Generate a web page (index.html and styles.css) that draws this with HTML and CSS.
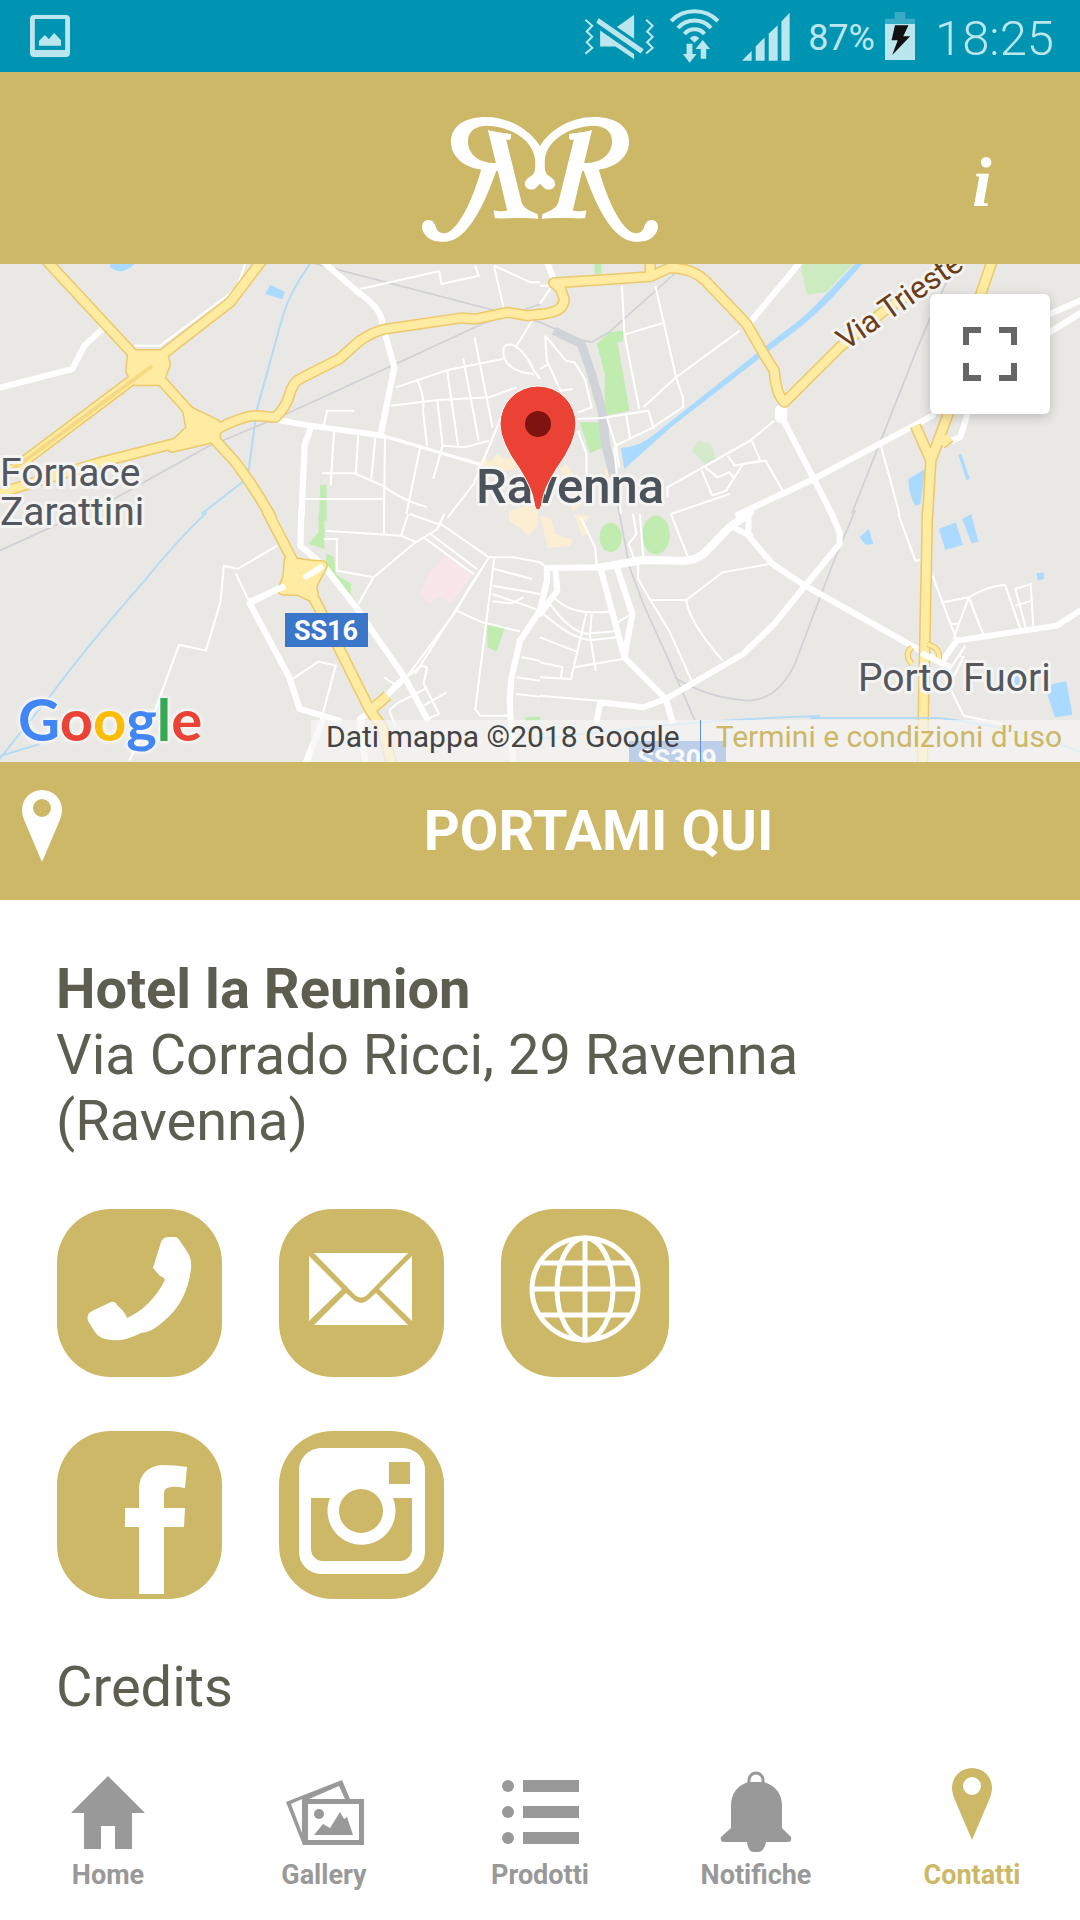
FILE: index.html
```html
<!DOCTYPE html>
<html lang="it">
<head>
    <meta charset="UTF-8" />
    <meta name="viewport" content="width=device-width, initial-scale=1.0" />
    <title>Hotel la Reunion - Contatti</title>
    <link rel="stylesheet" href="styles.css">
</head>
<body>
    <div class="status-bar">
        <svg class="status-picture" width="40" height="42" viewBox="0 0 116 126" preserveAspectRatio="none">
            <path fill-rule="evenodd" d="M12 0H104Q116 0 116 12V114Q116 126 104 126H12Q0 126 0 114V12Q0 0 12 0ZM14 12V105H102V12Z" />
            <path d="M26 78L43 60L55 72L70 54L90 76V92H26Z" />
        </svg>
        <svg class="status-mute" width="70" height="47" viewBox="0 0 204 140" preserveAspectRatio="none">
            <g class="line">
                <path d="M4 20L24 38L8 55L24 71L8 87L24 104L4 121" />
                <path d="M181 20L200 38L184 55L200 71L184 87L200 104L181 121" />
            </g>
            <path d="M96 42L146 5V77ZM47 52L146 122V138L92 100H47ZM43 16L174 108L165 121L36 29Z" />
        </svg>
        <svg class="status-wifi" width="51" height="54" viewBox="0 0 148 162" preserveAspectRatio="none">
            <g class="arc">
                <path d="M6 36A94 94 0 0 1 142 36" />
                <path d="M26 57A63 63 0 0 1 122 57" />
                <path d="M45 75A37 37 0 0 1 103 75" />
            </g>
            <path d="M60 88Q74 72 88 88L74 101Z" />
            <path d="M51 104H68V135H80L60 161L40 135H51ZM92 149V120H77L98 93L119 120H108V149Z" />
        </svg>
        <svg class="status-signal" width="48" height="49" viewBox="0 0 140 148" preserveAspectRatio="none">
            <path d="M0 147L28 118V147ZM40 104L66 77V147H40ZM78 66L104 40V147H78ZM115 29L139 2V147H115Z" />
        </svg>
        <span class="status-percent">87%</span>
        <svg class="status-battery" width="30" height="48" viewBox="0 0 87 144" preserveAspectRatio="none">
            <path class="dim" d="M28 0H59V20H87V36H0V20H28Z" />
            <path d="M0 36H87V144H0Z" />
            <path class="bolt" d="M29 40H68L53 73H73L21 129L37 85H19Z" />
        </svg>
        <span class="status-time">18:25</span>
    </div>

    <header class="header">
        <svg class="logo" width="236" height="125" viewBox="68 50 709 375" role="img" aria-label="Reunion">
            <defs>
                <g id="half">
                    <path d="M422 138C452 88 515 50 585 50C650 50 690 78 690 125C690 175 640 208 580 210L548 212L552 188C602 190 639 165 639 122C639 90 612 75 580 76C510 80 442 118 437 180C436 205 437 216 446 225C460 232 468 242 468 252C466 268 445 272 435 263L421 249Z" />
                    <path d="M510 101C530 98 560 95 579 89L549 213L521 331C535 335 550 333 562 330L558 354C520 356 470 350 428 356L430 341C452 332 472 325 478 305L524 118H512Q508 108 510 101Z" />
                    <path d="M556 200H597C622 290 655 362 690 391C704 403 724 402 733 387C738 368 746 358 759 359C771 360 777 369 777 381C775 405 750 424 725 424C705 426 680 424 650 395C605 350 575 270 553 209Z" />
                </g>
            </defs>
            <use href="#half" />
            <use href="#half" transform="translate(845 0) scale(-1 1)" />
        </svg>
        <button class="info" type="button" aria-label="Informazioni">i</button>
    </header>

    <section class="map" aria-label="Mappa">
        <svg class="map-canvas" viewBox="0 0 1080 498" preserveAspectRatio="xMidYMid slice">
            <defs>
                <!-- main roads, drawn once as casing and once as fill -->
                <g id="highways">
                    <g transform="scale(.3444 .3333)">
                        <path class="line" d="M135 -10L395 280L460 340L600 500L680 590Q740 670 790 765" />
                        <path class="line" d="M760 -10L668 115L455 285" />
                        <path class="line" d="M-10 690L280 598L500 540L620 505L640 490Q710 455 745 455L800 460Q830 430 840 395Q850 355 870 345L985 285L1045 230Q1090 200 1120 195L1340 162L1380 165L1475 145L1530 155L1580 150" />
                        <path class="line" d="M-10 650L85 580L445 300" />
                        <path d="M385 272H472L480 300L462 350H395L380 320ZM545 440L625 480V520L500 550L555 495Z" />
                    </g>
                    <g transform="translate(540) scale(.3444 .3333)">
                        <path class="line" d="M-10 152L20 148Q70 140 70 105L60 75L40 57L320 38L375 12Q440 10 480 50L600 180L650 270L680 320Q685 390 710 415L870 250L1000 140L1190 10M320 -10V35" />
                        <path class="line" d="M1313 -10L1270 120L1185 450L1135 590L1125 760M1090 485L1135 590M1190 520L1165 540" />
                    </g>
                    <g transform="translate(0 250) scale(.3444 .3333)">
                        <path class="line" d="M775 -10L850 140L880 190L930 290L1075 590L1110 640L1140 760M1075 590L1125 545" />
                        <path d="M840 140Q880 155 935 155L905 215L910 250L870 230L822 228L836 190Z" />
                    </g>
                    <g transform="translate(540 250) scale(.3444 .3333)">
                        <path class="line" d="M1125 -10L1110 760" />
                    </g>
                </g>
                <g id="ramps" transform="translate(540 250) scale(.3444 .3333)">
                    <path class="line" d="M1080 400Q1055 420 1080 450M1125 390Q1170 405 1155 445" />
                </g>
            </defs>

            <rect width="1080" height="498" fill="#e9e8e5" />

            <g class="park">
                <path transform="scale(.3444 .3333)" d="M930 662H948V770H926Z" />
                <g transform="translate(540) scale(.3444 .3333)">
                    <path opacity=".7" d="M755 0H910L830 85L775 92Z" />
                    <path d="M165 240L200 205L245 200L240 232L225 235L260 440L188 455V330ZM115 475H175L185 550L145 568ZM158 0H178V28L160 32Z" />
                    <path opacity=".5" d="M440 560L460 530L495 540L512 585L480 600Z" />
                </g>
                <path transform="translate(0 250) scale(.3444 .3333)" d="M925 0H942V105L895 90L925 55ZM948 118L970 130L975 180L1020 210L1018 240L1040 270L945 160ZM1415 332L1468 335L1442 412L1415 400ZM1525 610L1568 608V620H1525Z" />
                <g transform="translate(540 250) scale(.3444 .3333)">
                    <ellipse cx="205" cy="70" rx="32" ry="44" />
                    <ellipse cx="337" cy="63" rx="40" ry="58" />
                </g>
            </g>
            <path class="hospital" transform="translate(0 250) scale(.3444 .3333)" d="M1295 125L1378 178L1310 268L1275 250L1245 268L1218 240L1250 170Z" />
            <g class="centre">
                <path d="M509 247L518 244L532 240L538 248V262L528 272L522 265L509 257Z" />
                <path d="M478 200L484 192L490 198L498 190L506 196L515 192V206H478ZM540 252L551 254L555 270L573 276L570 282L548 284ZM574 250L590 252L585 258L589 270L582 272ZM560 205L566 200L576 214L582 240L572 248L566 225ZM604 205H611L618 218H608Z" />
            </g>

            <g class="water">
                <path transform="scale(.3444 .3333)" d="M320 0H390Q355 38 320 10ZM785 62L827 83L820 106L770 90Z" />
                <g transform="translate(540) scale(.3444 .3333)">
                    <path d="M235 552Q290 550 340 505L700 210Q770 160 840 80L915 0H936L850 100Q780 175 710 225L380 490L245 615Z" />
                    <path d="M1070 645L1118 615L1105 720L1090 725Q1070 690 1070 645ZM1215 572L1223 570L1248 645L1238 648Z" />
                </g>
                <path transform="translate(540 250) scale(.3444 .3333)" d="M928 70L955 44L968 90L945 92ZM1158 45L1207 25L1228 92L1177 108ZM1226 15L1252 0L1273 83L1253 88ZM1442 178L1463 175V195L1445 200ZM1465 515L1528 502L1546 602L1495 610ZM1370 475L1400 480L1395 520L1372 515Z" />
            </g>
            <g class="stream">
                <path transform="scale(.3444 .3333)" d="M900 0Q840 85 820 160L745 440L722 620M722 640L585 750" />
                <path transform="translate(0 250) scale(.3444 .3333)" d="M600 -5Q500 95 420 200Q250 400 150 540L-5 740" />
            </g>

            <!-- railways -->
            <g class="rail">
                <path transform="scale(.3444 .3333)" d="M900 -5L1420 135L1570 175M1570 120L1400 180L1180 285L820 455L600 550L340 700L-5 862" />
                <g transform="translate(540) scale(.3444 .3333)">
                    <path d="M0 175L110 225L150 235L200 205L390 30M1180 55Q1110 210 1070 320L905 750" />
                    <path class="yard" d="M40 200L120 240L150 330L180 440L190 540L215 640" />
                </g>
                <path transform="translate(540 250) scale(.3444 .3333)" d="M230 -5L260 160L300 270L370 430L450 620M915 -10L850 150L740 450Q690 560 600 560Q480 550 390 490M215 -100L230 0" />
            </g>

            <g class="street">
                <g transform="scale(.3444 .3333)">
                    <path d="M712 0L690 65L660 95L465 245H390M1045 75L1275 22L1282 60L1390 35L1380 5M1435 10L1462 130M1435 5L1540 55H1568M1545 170L1500 245" />
                    <path d="M1150 370L1300 318L1460 285M1135 425L1270 408L1420 400L1500 370M1210 345Q1235 400 1228 440L1240 545M1298 318L1330 545M1345 283L1390 530M1378 220L1430 490M1270 410L1285 545L1350 550L1420 530M970 500L960 665M1040 515L1033 630M1090 520L1078 645M1118 520L1115 760M1220 550L1180 750M1285 545L1258 645M935 628H1030L1110 665Q1170 710 1240 730M885 705H1115M940 485L950 440H1028M1455 460L1375 660L1300 760" />
                    <path d="M1495 245Q1450 230 1465 285Q1485 325 1550 330M1495 245Q1530 270 1550 320L1568 345" />
                </g>
                <g transform="translate(540) scale(.3444 .3333)">
                    <path d="M238 65L245 210L288 435M335 65L395 340L415 400V430L320 495L220 545M245 212L355 178M580 200L395 340L300 430M15 215L75 290L100 295L130 345L150 430L110 445M15 215L20 290L60 380L95 375M0 315L25 300M110 465L180 462L315 440L330 495M195 462L220 545L230 610M250 450L262 525M215 550L235 750M110 500L135 570V650M680 470L610 530L370 670V700M470 620L500 695M480 610L515 640L550 625L565 645M545 575L565 605L640 590L615 530M500 695L540 680L590 600L655 590L710 690M0 65H35L0 120M550 690L380 750M990 545L1045 755" />
                </g>
                <g transform="translate(0 250) scale(.3444 .3333)">
                    <path d="M375 740L450 590L520 392L598 410L640 265L650 155L690 165L805 95M685 180L725 265M845 498L925 443L975 455L900 740M945 50L1165 65L1210 85M1115 0V60M1185 0L1165 65M1290 0L1270 45L1200 90L1085 190L1040 270M940 75H978V170L1085 190M1280 30L1420 130M1250 60L1385 165M1230 70L1375 180M1190 0L1285 35" />
                    <path d="M1420 130L1360 225L1325 290L1180 490M1405 155L1205 480M1435 135L1380 585L1395 605H1475M1420 130H1490L1568 145M1435 165L1545 195M1430 215L1568 240M1430 240L1568 290M1430 262L1485 268L1520 250M1325 290L1400 325L1510 352M1515 430L1568 440M1500 490L1568 500M1500 540L1568 548M1180 490L1225 455L1240 460L1230 510L1275 600L1240 615M1115 490L1160 520M1130 590L1150 570L1240 522M1230 575L1297 535M1130 590L1150 640" />
                </g>
                <g transform="translate(540 250) scale(.3444 .3333)">
                    <path d="M118 10L160 100L165 160M0 145L20 160M270 0L280 60L258 90L275 140M290 0L300 130M380 0L430 130M320 257L425 258L530 175L665 150M425 258Q430 320 530 440M285 130L285 195L320 257L375 350L440 500M225 325L265 300M40 250Q90 305 200 293M25 265Q100 370 150 358L220 352M10 300Q100 380 150 378L225 370M135 295L90 495L0 490M150 300L145 365L162 470M0 370L105 412M0 445L65 460L60 495M100 460L240 435M0 545L170 560M1040 0L1090 140L1110 138M1140 185L1210 380M1170 265L1245 250L1200 375M1245 250Q1300 215 1350 212L1395 345M1245 250L1290 370M1410 340L1380 225L1425 210L1432 335M1380 275L1428 260M1195 330H1220M1200 490L1230 430L1215 425M1235 395L1175 490L1230 605L1340 630" />
                </g>
            </g>

            <g class="avenue">
                <g transform="scale(.3444 .3333)">
                    <path d="M-5 372L210 315L245 245L300 193M940 -5L1040 85Q1110 135 1110 180L1145 310L1105 515M800 467L900 485L1110 515M905 485L885 540L875 760" />
                    <path stroke-width="10" d="M1110 515L1390 600" />
                </g>
                <g transform="translate(540) scale(.3444 .3333)">
                    <path d="M20 -5L40 45M755 -5L610 175M710 415L700 455L795 645L850 755M575 752L795 645L1140 455M1480 150L1568 110M1480 205L1568 148M1240 455L1220 520L1195 530" />
                    <path class="junction" d="M700 440V460" />
                </g>
                <g transform="translate(0 250) scale(.3444 .3333)">
                    <path d="M875 -10L872 95L940 155L1030 275L1175 490L1240 615M925 162L725 268L840 490L870 585L985 620M1175 490L1080 590L1045 615L1060 740M1568 290L1510 380L1485 490L1480 560L1490 750M935 625L890 740" />
                </g>
                <g transform="translate(540 250) scale(.3444 .3333)">
                    <path class="wide" d="M610 -5L550 40L475 120Q440 145 400 140L300 138L175 160" />
                    <path d="M175 160L20 162V200L0 290M45 165L50 230L0 300M175 160L245 430M225 165L268 300L245 430L365 555L385 625M165 620L175 565L300 580L365 555L590 420L680 330L770 215L870 90V55L845 -5M605 0V65L675 150L770 215L1165 445L1210 380L1500 335L1568 290M560 40L610 65" />
                </g>
            </g>

            <use href="#highways" class="casing" />
            <use href="#highways" class="road" />
            <use href="#ramps" class="casing ramp" />
            <use href="#ramps" class="road ramp" />
            <path class="lane" d="M0 214L30 193L152 102" />
            <path class="bridge" d="M249 338L285 322M304 314L323 302M921 389L950 403" />

            <path class="stream" d="M540 475Q700 455 820 452M810 454H940Q1030 466 1080 488M0 492Q20 486 40 480" />

            <rect x="285" y="349" width="83" height="34" fill="#3a76c9" />
            <text class="shield" x="326" y="376" text-anchor="middle">SS16</text>
            <rect x="629" y="477" width="97" height="24" fill="#3a76c9" />
            <text class="shield" x="677" y="505" text-anchor="middle">SS309</text>

            <text class="label" x="0" y="222">Fornace</text>
            <text class="label" x="0" y="261">Zarattini</text>
            <text class="label" x="858" y="427">Porto Fuori</text>
            <text class="label label-city" x="476" y="239">Ravenna</text>
            <text class="label label-road" transform="translate(846 87) rotate(-35)">Via Trieste</text>

            <path class="marker" d="M538 246Q535 246 534 238Q532 224 519 204Q500 178 500 160A38 38 0 0 1 576 160Q576 178 557 204Q544 224 542 238Q541 246 538 246Z" />
            <circle cx="538" cy="160" r="13" fill="#7f1310" />
        </svg>

        <a class="google" href="#" aria-label="Google"><span class="blue">G</span><span class="red">o</span><span class="yellow">o</span><span class="blue">g</span><span class="green">l</span><span class="red">e</span></a>

        <button class="fullscreen" type="button" aria-label="Schermo intero">
            <svg width="54" height="54" viewBox="0 0 54 54">
                <path d="M18 3H3V18M36 3H51V18M18 51H3V36M36 51H51V36" />
            </svg>
        </button>

        <div class="attribution">
            <span class="attribution-data">Dati mappa ©2018 Google</span>
            <a class="attribution-terms" href="#">Termini e condizioni d'uso</a>
        </div>
    </section>

    <a class="directions" href="#">
        <svg width="42" height="72" viewBox="0 0 42 72">
            <path fill-rule="evenodd" d="M21 0A20 20 0 0 1 41 20Q41 25 38 32L21 72L4 32Q1 25 1 20A20 20 0 0 1 21 0ZM21 9A9 9 0 0 0 21 27A9 9 0 0 0 21 9Z" />
        </svg>
        <span>PORTAMI QUI</span>
    </a>

    <main class="contacts">
        <address class="address">
            <strong>Hotel la Reunion</strong><br>
            Via Corrado Ricci, 29 Ravenna (Ravenna)
        </address>

        <div class="tiles">
            <a class="tile" href="#" aria-label="Telefono">
                <svg width="165" height="168" viewBox="0 0 165 168">
                    <path d="M104 33Q106 28 112 28H117Q121 28 123 32L131 44Q135 51 134 60Q130 93 107 112Q94 124 84 124Q66 133 55 131Q42 130 38 123L31 112Q29 105 35 102L54 93Q58 92 60 96Q69 104 70 109Q94 98 108 71Q107 68 103 67L96 59Z" />
                </svg>
            </a>
            <a class="tile" href="#" aria-label="Email">
                <svg width="165" height="168" viewBox="0 0 165 168">
                    <path d="M35 44H129L88 86Q82 91 76 86ZM30 47L63 80L30 112ZM133 47V112L100 80ZM35 116L67 84L75 91Q82 97 89 91L97 84L129 116Z" />
                </svg>
            </a>
            <a class="tile" href="#" aria-label="Sito web">
                <svg width="168" height="168" viewBox="0 0 168 168">
                    <g class="globe">
                        <ellipse cx="84" cy="80" rx="53" ry="51" />
                        <ellipse cx="84" cy="80" rx="28" ry="51" />
                        <path d="M84 29V131M31 80H137M40 54H128M40 106H128" />
                    </g>
                </svg>
            </a>
            <a class="tile" href="#" aria-label="Facebook">
                <svg width="165" height="168" viewBox="0 0 165 168">
                    <path d="M130 36L128 57Q107 53 107 62V77H128L127 96H107V163H82V96H68V77H82V57Q83 37 104 34Q118 34 130 36Z" />
                </svg>
            </a>
            <a class="tile" href="#" aria-label="Instagram">
                <svg width="165" height="168" viewBox="0 0 165 168">
                    <path fill-rule="evenodd" d="M42 17H124A22 22 0 0 1 146 39V121A22 22 0 0 1 124 143H42A22 22 0 0 1 20 121V39A22 22 0 0 1 42 17ZM110 31V53H131V31ZM32 67V118A12 12 0 0 0 44 130H121A12 12 0 0 0 133 118V67H114A34 34 0 1 1 51 67ZM82 58A22 22 0 0 0 82 102A22 22 0 0 0 82 58Z" />
                </svg>
            </a>
        </div>

        <a class="credits" href="#">Credits</a>
    </main>

    <nav class="tabs">
        <a class="tab" href="#">
            <svg width="84" height="84" viewBox="0 0 84 84">
                <path d="M42 8L79 45H66V81H49V58H35V81H18V45H5Z" />
            </svg>
            Home
        </a>
        <a class="tab" href="#">
            <svg width="84" height="84" viewBox="0 0 84 84">
                <path fill-rule="evenodd" d="M21 31H82V77H21L4 34L60 12L68 31ZM26 36V72H77V36ZM9 36L20 65V31ZM27 31H63L57 18Z" />
                <circle cx="37" cy="46" r="5" />
                <path d="M32 67L41 56L48 60L58 44L62 51L65 49L71 67Z" />
            </svg>
            Gallery
        </a>
        <a class="tab" href="#">
            <svg width="84" height="84" viewBox="0 0 84 84">
                <circle cx="10" cy="18" r="6" />
                <circle cx="10" cy="44" r="6" />
                <circle cx="10" cy="70" r="6" />
                <path d="M25 12H81V24H25ZM25 38H81V50H25ZM25 64H81V76H25Z" />
            </svg>
            Prodotti
        </a>
        <a class="tab" href="#">
            <svg width="84" height="84" viewBox="0 0 84 84">
                <path class="bell-ring" d="M35 17V12A7 7 0 0 1 49 12V17" />
                <path d="M34 14H50Q68 20 68 38V60L77 69Q78 74 74 74H52Q50 84 44 84H40Q34 84 33 74H10Q6 74 7 69L17 60V38Q17 20 34 14Z" />
            </svg>
            Notifiche
        </a>
        <a class="tab tab-active" href="#" aria-current="page">
            <svg width="84" height="84" viewBox="0 0 84 84">
                <path fill-rule="evenodd" d="M42 0A20 20 0 0 1 62 20Q62 25 59 32L42 72L25 32Q22 25 22 20A20 20 0 0 1 42 0ZM42 9A9 9 0 0 0 42 27A9 9 0 0 0 42 9Z" />
            </svg>
            Contatti
        </a>
    </nav>
</body>
</html>
```

FILE: styles.css
```css
* {
    box-sizing: border-box;
}
body {
    margin: 0;
    min-height: 100vh;
    display: flex;
    flex-direction: column;
    background: #fff;
    color: #5d5e50;
    font-family: Roboto, "Liberation Sans", sans-serif;
}
a {
    color: inherit;
    text-decoration: none;
}
button {
    border: none;
    padding: 0;
    cursor: pointer;
}
svg {
    display: block;
    flex: none;
}

/* status bar */
.status-bar {
    height: 72px;
    padding: 0 26px 0 30px;
    display: flex;
    align-items: center;
    background: #0094b3;
    color: #bce6ee;
}
.status-bar svg {
    fill: #bce6ee;
}
.status-picture {
    margin-right: auto;
}
.status-mute {
    margin-right: 15px;
}
.status-mute .line {
    fill: none;
    stroke: #bce6ee;
    stroke-width: 6;
}
.status-wifi {
    margin-right: 22px;
}
.status-wifi .arc {
    fill: none;
    stroke: #bce6ee;
    stroke-width: 12;
}
.status-signal {
    margin-right: 18px;
}
.status-percent {
    margin-right: 10px;
    padding-top: 4px;
    font-size: 36px;
}
.status-battery {
    margin-right: 20px;
}
.status-battery .dim {
    opacity: 0.3;
}
.status-battery .bolt {
    fill: #111;
}
.status-time {
    padding-top: 4px;
    font-size: 49px;
    font-weight: 300;
}

/* header */
.header {
    height: 192px;
    padding-top: 22px;
    display: grid;
    grid-template-columns: 1fr auto 1fr;
    align-items: center;
    background: #ccb866;
}
.logo {
    grid-column: 2;
    fill: #fff;
}
.info {
    justify-self: end;
    width: 60px;
    margin-right: 68px;
    padding-top: 8px;
    background: none;
    color: #fff;
    font: italic bold 70px "Liberation Serif", serif;
}

/* map */
.map {
    position: relative;
    height: 498px;
    overflow: hidden;
    background: #e9e8e5;
}
.map-canvas {
    width: 100%;
    height: 100%;
}
.map-canvas .line {
    fill: none;
}
.park {
    fill: #c0ecb0;
}
.hospital {
    fill: #f9e6e8;
}
.centre {
    fill: #fbeed2;
}
.water {
    fill: #aadaff;
}
.stream {
    fill: none;
    stroke: #b4dcf5;
    stroke-width: 6;
}
path.stream {
    stroke-width: 2;
}
.rail {
    fill: none;
    stroke: #d0d1d5;
    stroke-width: 5;
}
.rail .yard {
    stroke: #d0d3d8;
    stroke-width: 26;
}
.street {
    fill: none;
    stroke: #fff;
    stroke-width: 6;
}
.avenue {
    fill: none;
    stroke: #fff;
    stroke-width: 18;
    stroke-linejoin: round;
    stroke-linecap: round;
}
.avenue .wide {
    stroke-width: 24;
}
.avenue .junction {
    stroke-width: 36;
}
.casing {
    fill: #edc96c;
    stroke: #edc96c;
    stroke-width: 34;
    stroke-linejoin: round;
}
.road {
    fill: #ffeba1;
    stroke: #ffeba1;
    stroke-width: 25;
    stroke-linejoin: round;
}
.casing.ramp {
    stroke-width: 18;
}
.road.ramp {
    stroke-width: 11;
}
.lane {
    fill: none;
    stroke: #f5d884;
    stroke-width: 4;
}
.bridge {
    stroke: #fff;
    stroke-width: 6;
}
.label {
    fill: #54585e;
    stroke: #f4f4f3;
    stroke-width: 6;
    stroke-linejoin: round;
    paint-order: stroke;
    font-size: 39px;
}
.label-city {
    fill: #4b5259;
    font-size: 49px;
    font-weight: 500;
}
.label-road {
    fill: #6b3d16;
    font-size: 31px;
}
.shield {
    fill: #fff;
    font-size: 27px;
    font-weight: 700;
}
.marker {
    fill: #ea4335;
    stroke: #fff;
    stroke-width: 1;
}
.google {
    position: absolute;
    left: 18px;
    bottom: 3px;
    font: 700 58px/80px Lato, sans-serif;
    text-shadow: 0 0 4px #fff, 0 0 6px #fff;
}
.google .blue {
    color: #4285f4;
}
.google .red {
    color: #ea4335;
}
.google .yellow {
    color: #fbbc05;
}
.google .green {
    color: #34a853;
}
.fullscreen {
    position: absolute;
    top: 30px;
    right: 30px;
    width: 120px;
    height: 120px;
    display: flex;
    align-items: center;
    justify-content: center;
    border-radius: 6px;
    background: #fff;
    box-shadow: 0 3px 12px rgba(0, 0, 0, 0.2);
}
.fullscreen path {
    fill: none;
    stroke: #666;
    stroke-width: 6;
}
.attribution {
    position: absolute;
    right: 0;
    bottom: 0;
    height: 42px;
    padding: 0 18px 0 15px;
    display: flex;
    background: rgba(245, 245, 245, 0.7);
    color: #444;
    font-size: 30px;
    line-height: 34px;
}
.attribution-data {
    padding-right: 20px;
    border-right: 1px solid #5d93d6;
}
.attribution-terms {
    padding-left: 15px;
    color: #ccb866;
}

/* directions */
.directions {
    height: 138px;
    padding-left: 21px;
    display: grid;
    grid-template-columns: 96px 1fr;
    align-items: center;
    background: #ccb866;
    color: #fff;
    font-size: 56px;
    font-weight: 700;
    line-height: 66px;
    text-align: center;
}
.directions svg {
    margin-bottom: 10px;
    fill: #fff;
}

/* contacts */
.contacts {
    padding: 56px 56px 0;
    font-size: 56px;
    line-height: 66px;
}
.address {
    max-width: 800px;
    font-style: normal;
}
.tiles {
    margin: 55px 1px;
    display: grid;
    grid-template-columns: 165px 165px 168px;
    gap: 54px 57px;
}
.tile {
    border-radius: 54px;
    background: #ccb866;
}
.tile svg {
    fill: #fff;
}
.tile .globe {
    fill: none;
    stroke: #fff;
    stroke-width: 5;
}

/* bottom tabs */
.tabs {
    margin-top: auto;
    padding-bottom: 28px;
    display: flex;
    background: #fff;
}
.tab {
    flex: 1;
    display: flex;
    flex-direction: column;
    align-items: center;
    gap: 6px;
    color: #999;
    font-size: 27px;
    font-weight: 700;
    line-height: 34px;
}
.tab svg {
    fill: currentColor;
}
.tab .bell-ring {
    fill: none;
    stroke: currentColor;
    stroke-width: 3;
}
.tab-active {
    color: #ccb866;
}
```
